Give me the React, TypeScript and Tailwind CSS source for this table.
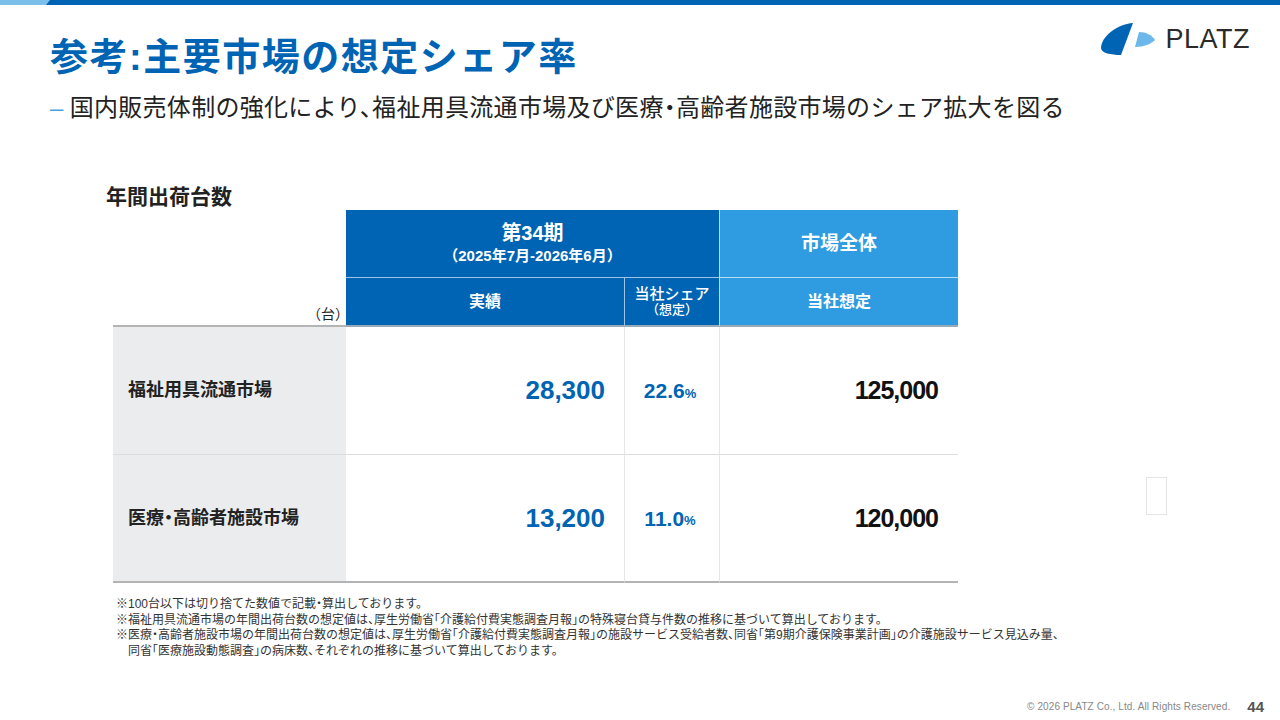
import React from 'react';

const rows = [
  { label: '福祉用具流通市場', actual: '28,300', share: '22.6', market: '125,000' },
  { label: '医療・高齢者施設市場', actual: '13,200', share: '11.0', market: '120,000' },
];

const notes = [
  '※100台以下は切り捨てた数値で記載・算出しております。',
  '※福祉用具流通市場の年間出荷台数の想定値は、厚生労働省「介護給付費実態調査月報」の特殊寝台貸与件数の推移に基づいて算出しております。',
  '※医療・高齢者施設市場の年間出荷台数の想定値は、厚生労働省「介護給付費実態調査月報」の施設サービス受給者数、同省「第9期介護保険事業計画」の介護施設サービス見込み量、',
];

const PlatzLogo: React.FC = () => (
  <div className="flex items-center gap-[8px]">
    <svg width="60" height="36" viewBox="0 0 60 36">
      <path d="M36 2 L24 34 C14 34 4 32 4 27 C4 16 20 3 36 2 Z" fill="#0064b4" />
      <path d="M42 11 L38 26 C47 26 54 23 58 19 C55 14 49 11 42 11 Z" fill="#6cb8ec" />
    </svg>
    <span className="text-[27px] leading-none tracking-[0.5px] text-[#2b2b2b] font-['Liberation_Sans',sans-serif]">
      PLATZ
    </span>
  </div>
);

export default function App() {
  return (
    <div className="relative flex flex-col w-[1280px] h-[720px] overflow-hidden bg-white font-['Liberation_Sans','Noto_Sans_CJK_JP',sans-serif] text-[#222]">
      {/* top bar */}
      <div className="flex h-[5px] bg-[#7bbfeb]">
        <div className="ml-[46px] flex-1 bg-[#0064b4] [clip-path:polygon(4px_0,100%_0,100%_100%,0_100%)]" />
      </div>

      {/* header */}
      <div className="flex justify-between pl-[50px] pr-[30px]">
        <h1 className="mt-[30px] text-[38px] leading-[1.2] tracking-[1.5px] font-bold text-[#0064b4]">
          参考:主要市場の想定シェア率
        </h1>
        <div className="mt-[16px]">
          <PlatzLogo />
        </div>
      </div>

      <p className="mt-[10px] pl-[50px] text-[24px] leading-[1.4] tracking-[0.3px] text-[#222] [font-feature-settings:'halt']">
        <span className="text-[#4aa3e0] mr-[6px]">–</span>
        国内販売体制の強化により、福祉用具流通市場及び医療・高齢者施設市場のシェア拡大を図る
      </p>

      {/* table */}
      <div className="mt-[59px] pl-[106px]">
        <h2 className="text-[21px] leading-[1.3] font-bold text-[#222]">年間出荷台数</h2>
        <div className="ml-[7px] w-[845px] grid grid-cols-[233px_278px_95px_239px] grid-rows-[68px_49px_128px_128px]">
          <div className="row-span-2 flex items-end justify-end pr-[4px] pb-[4px] border-b-2 border-[#b4b4b4]">
            <span className="text-[14px] leading-none [font-feature-settings:'halt']">（台）</span>
          </div>
          <div className="col-span-2 flex flex-col items-center justify-center bg-[#0064b4] text-white border-b border-[#9fc3e4]">
            <span className="text-[20px] leading-[1.2] font-bold">第34期</span>
            <span className="text-[15px] leading-[1.4] font-bold">（2025年7月-2026年6月）</span>
          </div>
          <div className="flex items-center justify-center bg-[#2f9be0] text-white text-[19px] font-bold border-l border-b border-[#b9dcf3]">
            市場全体
          </div>
          <div className="flex items-center justify-center bg-[#0064b4] text-white text-[16px] font-bold border-b-2 border-[#9aa9b8]">
            実績
          </div>
          <div className="flex flex-col items-center justify-center bg-[#0064b4] text-white font-medium border-l border-b-2 border-l-[#9fc3e4] border-b-[#9aa9b8]">
            <span className="text-[15px] leading-[1.1]">当社シェア</span>
            <span className="text-[13px] leading-[1.2]">（想定）</span>
          </div>
          <div className="flex items-center justify-center bg-[#2f9be0] text-white text-[16px] font-bold border-l border-b-2 border-l-[#b9dcf3] border-b-[#9aa9b8]">
            当社想定
          </div>

          {rows.map((r, i) => (
            <React.Fragment key={r.label}>
              <div
                className={
                  "flex items-center pl-[15px] bg-[#ebecee] text-[18px] font-bold text-[#222] [font-feature-settings:'halt'] " +
                  (i === 0 ? 'border-b border-[#dcdcdc]' : 'border-b-2 border-[#b4b4b4]')
                }
              >
                {r.label}
              </div>
              <div
                className={
                  'flex items-center justify-end pr-[19px] text-[26px] font-bold text-[#0064b4] ' +
                  (i === 0 ? 'border-b border-[#dcdcdc]' : 'border-b-2 border-[#b4b4b4]')
                }
              >
                {r.actual}
              </div>
              <div
                className={
                  'flex items-center justify-center pr-[4px] border-l border-l-[#e6e6e6] text-[#0064b4] font-bold ' +
                  (i === 0 ? 'border-b border-b-[#dcdcdc]' : 'border-b-2 border-b-[#b4b4b4]')
                }
              >
                <span className="text-[21px]">{r.share}</span>
                <span className="text-[13px] mt-[5px]">%</span>
              </div>
              <div
                className={
                  'flex items-center justify-end pr-[20px] border-l border-l-[#e6e6e6] text-[25px] tracking-[-1px] font-bold text-[#111] ' +
                  (i === 0 ? 'border-b border-b-[#dcdcdc]' : 'border-b-2 border-b-[#b4b4b4]')
                }
              >
                {r.market}
              </div>
            </React.Fragment>
          ))}
        </div>
      </div>

      {/* footnotes */}
      <div className="mt-[14px] pl-[116px] text-[12px] leading-[15.5px] text-[#333] [font-feature-settings:'halt']">
        {notes.map((n) => (
          <p key={n}>{n}</p>
        ))}
        <p className="pl-[12px]">同省「医療施設動態調査」の病床数、それぞれの推移に基づいて算出しております。</p>
      </div>

      {/* footer */}
      <div className="mt-auto mb-[2px] flex items-center justify-end gap-[17px] pr-[16px]">
        <span className="text-[10px] tracking-[0.1px] text-[#888]">© 2026 PLATZ Co., Ltd. All Rights Reserved.</span>
        <span className="text-[15px] font-bold text-[#555]">44</span>
      </div>

      <div className="absolute left-[1146px] top-[477px] w-[21px] h-[38px] border border-[#e4e4e4]" />
    </div>
  );
}
